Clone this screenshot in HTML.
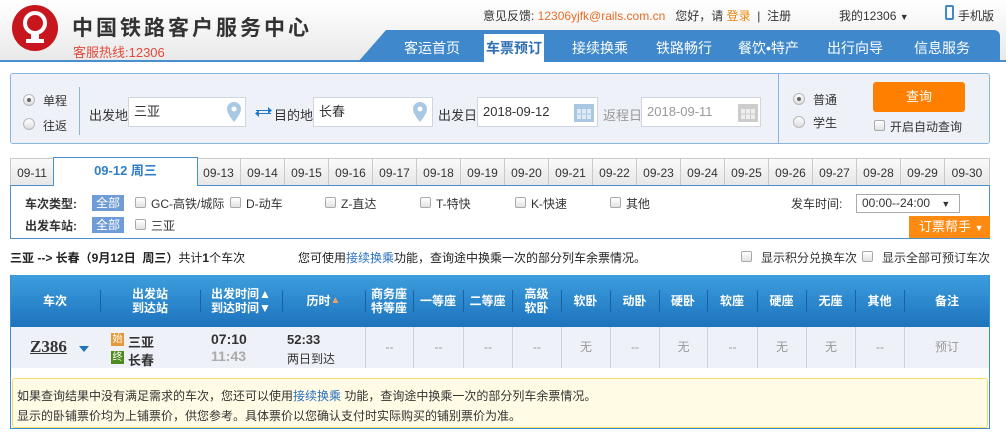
<!DOCTYPE html>
<html><head><meta charset="utf-8"><style>
*{margin:0;padding:0;box-sizing:border-box}
body{width:1006px;height:436px;overflow:hidden;background:#fff;font-family:"Liberation Sans","Noto Sans CJK SC",sans-serif;font-size:12px;color:#333;position:relative}
.a{position:absolute;white-space:nowrap}
.hdr{position:absolute;left:0;top:0;width:1006px;height:62px;background:linear-gradient(#fff,#e9e9e9);border-bottom:2px solid #4a90cf}
.nav{position:absolute;left:358px;top:30px;width:642px;height:32px;background:#3e88cb;border-radius:0 6px 0 0;clip-path:polygon(28px 0,100% 0,100% 100%,0 100%)}
.nav span{position:absolute;top:8px;color:#fff;font-size:14px}
.inp{position:absolute;height:30px;background:#fff;border:1px solid #cfd6e0;font-size:13px;padding-left:5px;line-height:28px}
.radio{position:absolute;width:12px;height:12px;border-radius:50%;border:1px solid #b8b8b8;background:linear-gradient(#fff,#ddd)}
.radio.on::after{content:"";position:absolute;left:3px;top:3px;width:4px;height:4px;border-radius:50%;background:#666}
.cb{position:absolute;width:11px;height:11px;border:1px solid #aaa;border-radius:2px;background:linear-gradient(#fff,#e2e2e2)}
.tab{position:absolute;top:158px;height:28px;border:1px solid #c9c9c9;border-bottom:none;border-left:none;background:linear-gradient(#fafafa,#e6e6e6);text-align:center;line-height:28px;font-size:12px;width:44px}
.badge{position:absolute;background:#6f9bd6;color:#fff;padding:0 4px;height:16px;line-height:16px;font-size:12px}
.th{position:absolute;top:275px;height:52px;color:#fff;font-weight:bold;font-size:12px;text-align:center;line-height:14px;display:flex;align-items:center;justify-content:center}
.td{position:absolute;top:327px;height:41px;border-left:1px solid #c8d3e2;text-align:center;line-height:41px;color:#999;font-size:12px}
</style></head><body>
<div class="hdr"></div>
<svg class="a" style="left:11px;top:4px" width="48" height="48" viewBox="0 0 48 48"><circle cx="24" cy="24" r="23" fill="#c7161e"/><circle cx="24" cy="19" r="10" fill="none" stroke="#fff" stroke-width="4"/><path d="M20 27h8v9h-8z" fill="#fff"/><rect x="15" y="35" width="18" height="4" fill="#fff"/></svg>
<div class="a" style="left:72px;top:12px;font-size:21px;letter-spacing:3px;color:#333;font-weight:bold">中国铁路客户服务中心</div>
<div class="a" style="left:73px;top:42px;font-size:13px;color:#e04a3a">客服热线:12306</div>
<div class="a" style="left:483px;top:7px;font-size:12px;color:#333">意见反馈: <span style="color:#e86c24">12306yjfk@rails.com.cn</span>&nbsp;&nbsp; 您好，请 <span style="color:#e8860e">登录</span> &nbsp;| &nbsp;注册</div>
<div class="a" style="left:839px;top:7px;font-size:12px">我的12306 <span style="font-size:9px">▼</span></div>
<div class="a" style="left:945px;top:5px;width:9px;height:15px;border:2px solid #3e88cb;border-radius:2px"></div>
<div class="a" style="left:958px;top:7px;font-size:12px">手机版</div>
<div class="nav">
<span style="left:46px">客运首页</span>
<span style="left:126px;top:4px;background:#fff;color:#2f6fb3;font-weight:bold;padding:4px 2px;height:28px">车票预订</span>
<span style="left:214px">接续换乘</span>
<span style="left:298px">铁路畅行</span>
<span style="left:380px">餐饮•特产</span>
<span style="left:469px">出行向导</span>
<span style="left:556px">信息服务</span>
</div>
<div class="a" style="left:10px;top:73px;width:980px;height:71px;background:#eef1f8;border:1px solid #8ab6de;border-radius:3px"></div>
<div class="radio on" style="left:23px;top:94px"></div><div class="a" style="left:43px;top:92px;font-size:12px">单程</div>
<div class="radio" style="left:23px;top:118px"></div><div class="a" style="left:43px;top:117px;font-size:12px">往返</div>
<div class="a" style="left:79px;top:87px;width:1px;height:48px;background:#8ab6de"></div>
<div class="a" style="left:89px;top:105px;font-size:13px">出发地</div>
<div class="inp" style="left:128px;top:97px;width:118px">三亚</div>
<svg class="a" style="left:227px;top:102px" width="14" height="20" viewBox="0 0 14 20"><path d="M7 0a7 7 0 0 1 7 7c0 5-7 13-7 13S0 12 0 7a7 7 0 0 1 7-7z" fill="#a8c8e4"/><circle cx="7" cy="7" r="2.5" fill="#fff"/></svg>
<svg class="a" style="left:255px;top:105px" width="17" height="14" viewBox="0 0 17 14"><path d="M1 5h12V2l4 3.5-4 3.5V6H1z M16 9H4v3L0 8.5 4 5v3h12z" fill="#1f7ac8"/></svg>
<div class="a" style="left:274px;top:105px;font-size:13px">目的地</div>
<div class="inp" style="left:313px;top:97px;width:120px">长春</div>
<svg class="a" style="left:413px;top:102px" width="14" height="20" viewBox="0 0 14 20"><path d="M7 0a7 7 0 0 1 7 7c0 5-7 13-7 13S0 12 0 7a7 7 0 0 1 7-7z" fill="#a8c8e4"/><circle cx="7" cy="7" r="2.5" fill="#fff"/></svg>
<div class="a" style="left:438px;top:105px;font-size:13px">出发日</div>
<div class="inp" style="left:477px;top:97px;width:121px">2018-09-12</div>
<svg class="a" style="left:574px;top:102px" width="20" height="20"><rect x="0" y="2" width="20" height="18" fill="#a9c6e3"/><rect x="3" y="7" width="14" height="10" fill="#dfeaf5"/><path d="M7.5 7v10M12.5 7v10M3 12h14" stroke="#a9c6e3"/></svg>
<div class="a" style="left:603px;top:105px;font-size:13px;color:#999">返程日</div>
<div class="inp" style="left:641px;top:97px;width:120px;color:#999">2018-09-11</div>
<svg class="a" style="left:738px;top:102px" width="20" height="20"><rect x="0" y="2" width="20" height="18" fill="#ccc"/><rect x="3" y="7" width="14" height="10" fill="#eee"/><path d="M7.5 7v10M12.5 7v10M3 12h14" stroke="#ccc"/></svg>
<div class="a" style="left:778px;top:74px;width:1px;height:69px;background:#8ab6de"></div>
<div class="radio on" style="left:793px;top:93px"></div><div class="a" style="left:813px;top:91px;font-size:12px">普通</div>
<div class="radio" style="left:793px;top:116px"></div><div class="a" style="left:813px;top:114px;font-size:12px">学生</div>
<div class="a" style="left:873px;top:82px;width:92px;height:30px;background:#ff7f00;border-radius:3px;color:#fff;text-align:center;line-height:30px;font-size:13px">查询</div>
<div class="cb" style="left:874px;top:120px"></div><div class="a" style="left:890px;top:118px;font-size:12px">开启自动查询</div>
<div class="tab" style="left:10px;border-left:1px solid #c9c9c9">09-11</div>
<div class="a" style="left:53px;top:157px;width:145px;height:29px;background:#fff;border:1px solid #4a90cf;border-bottom:none;text-align:center;line-height:26px;color:#2f7fc7;font-weight:bold;font-size:13px;z-index:2">09-12 周三</div>
<div class="tab" style="left:197px">09-13</div><div class="tab" style="left:241px">09-14</div><div class="tab" style="left:285px">09-15</div><div class="tab" style="left:329px">09-16</div><div class="tab" style="left:373px">09-17</div><div class="tab" style="left:417px">09-18</div><div class="tab" style="left:461px">09-19</div><div class="tab" style="left:505px">09-20</div><div class="tab" style="left:549px">09-21</div><div class="tab" style="left:593px">09-22</div><div class="tab" style="left:637px">09-23</div><div class="tab" style="left:681px">09-24</div><div class="tab" style="left:725px">09-25</div><div class="tab" style="left:769px">09-26</div><div class="tab" style="left:813px">09-27</div><div class="tab" style="left:857px">09-28</div><div class="tab" style="left:901px">09-29</div><div class="tab" style="left:945px;width:45px">09-30</div>
<div class="a" style="left:10px;top:185px;width:980px;height:54px;border:1px solid #4a90cf"></div>
<div class="a" style="left:54px;top:185px;width:143px;height:2px;background:#fff;z-index:3"></div>
<div class="a" style="left:25px;top:195px;font-weight:bold;font-size:12px">车次类型:</div>
<div class="badge" style="left:92px;top:195px">全部</div>
<div class="cb" style="left:135px;top:197px"></div><div class="a" style="left:151px;top:195px">GC-高铁/城际</div>
<div class="cb" style="left:230px;top:197px"></div><div class="a" style="left:246px;top:195px">D-动车</div>
<div class="cb" style="left:325px;top:197px"></div><div class="a" style="left:341px;top:195px">Z-直达</div>
<div class="cb" style="left:420px;top:197px"></div><div class="a" style="left:436px;top:195px">T-特快</div>
<div class="cb" style="left:515px;top:197px"></div><div class="a" style="left:531px;top:195px">K-快速</div>
<div class="cb" style="left:610px;top:197px"></div><div class="a" style="left:626px;top:195px">其他</div>
<div class="a" style="left:25px;top:217px;font-weight:bold;font-size:12px">出发车站:</div>
<div class="badge" style="left:92px;top:217px">全部</div>
<div class="cb" style="left:135px;top:219px"></div><div class="a" style="left:151px;top:217px">三亚</div>
<div class="a" style="left:791px;top:195px">发车时间:</div>
<div class="a" style="left:856px;top:194px;width:104px;height:19px;border:1px solid #aaa;background:#fff;line-height:17px;padding-left:5px">00:00--24:00 <span style="font-size:9px;margin-left:8px">▼</span></div>
<div class="a" style="left:909px;top:216px;width:81px;height:22px;background:#ff8a12;color:#fff;line-height:22px;padding-left:10px;font-size:13px">订票帮手 <span style="font-size:9px">▼</span></div>
<div class="a" style="left:10px;top:249px;font-size:12px;color:#222"><b>三亚 --&gt; 长春（9月12日&nbsp; 周三）</b>共计<b>1</b>个车次</div>
<div class="a" style="left:298px;top:249px;font-size:12px;color:#222">您可使用<span style="color:#2a6fc0">接续换乘</span>功能，查询途中换乘一次的部分列车余票情况。</div>
<div class="cb" style="left:741px;top:251px"></div><div class="a" style="left:761px;top:249px">显示积分兑换车次</div>
<div class="cb" style="left:862px;top:251px"></div><div class="a" style="left:882px;top:249px">显示全部可预订车次</div>
<div class="a" style="left:10px;top:275px;width:980px;height:52px;background:linear-gradient(#3d9ede,#1d73bd)"></div>
<div class="a" style="left:10px;top:275px;width:980px;height:154px;border:1px solid #3b8fd0;border-top:none"></div>
<div class="th" style="left:10px;width:90px">车次</div>
<div class="th" style="left:100px;width:100px">出发站<br>到达站</div>
<div class="th" style="left:200px;width:82px">出发时间▲<br>到达时间▼</div>
<div class="th" style="left:282px;width:83px">历时 <span style="color:#f0a060;font-size:10px">▲</span></div>
<div class="th" style="left:365px;width:48px">商务座<br>特等座</div>
<div class="th" style="left:413px;width:50px">一等座</div>
<div class="th" style="left:463px;width:49px">二等座</div>
<div class="th" style="left:512px;width:49px">高级<br>软卧</div>
<div class="th" style="left:561px;width:49px">软卧</div>
<div class="th" style="left:610px;width:49px">动卧</div>
<div class="th" style="left:659px;width:48px">硬卧</div>
<div class="th" style="left:707px;width:50px">软座</div>
<div class="th" style="left:757px;width:49px">硬座</div>
<div class="th" style="left:806px;width:49px">无座</div>
<div class="th" style="left:855px;width:49px">其他</div>
<div class="th" style="left:904px;width:86px">备注</div>
<div class="a" style="left:100px;top:290px;width:1px;height:22px;background:#1b62a3"></div><div class="a" style="left:200px;top:290px;width:1px;height:22px;background:#1b62a3"></div><div class="a" style="left:282px;top:290px;width:1px;height:22px;background:#1b62a3"></div><div class="a" style="left:365px;top:290px;width:1px;height:22px;background:#1b62a3"></div><div class="a" style="left:413px;top:290px;width:1px;height:22px;background:#1b62a3"></div><div class="a" style="left:463px;top:290px;width:1px;height:22px;background:#1b62a3"></div><div class="a" style="left:512px;top:290px;width:1px;height:22px;background:#1b62a3"></div><div class="a" style="left:561px;top:290px;width:1px;height:22px;background:#1b62a3"></div><div class="a" style="left:610px;top:290px;width:1px;height:22px;background:#1b62a3"></div><div class="a" style="left:659px;top:290px;width:1px;height:22px;background:#1b62a3"></div><div class="a" style="left:707px;top:290px;width:1px;height:22px;background:#1b62a3"></div><div class="a" style="left:757px;top:290px;width:1px;height:22px;background:#1b62a3"></div><div class="a" style="left:806px;top:290px;width:1px;height:22px;background:#1b62a3"></div><div class="a" style="left:855px;top:290px;width:1px;height:22px;background:#1b62a3"></div><div class="a" style="left:904px;top:290px;width:1px;height:22px;background:#1b62a3"></div>
<div class="a" style="left:11px;top:327px;width:978px;height:41px;background:#eef1f8"></div>
<div class="a" style="left:30px;top:337px;font-size:17px;font-weight:bold;font-family:'Liberation Serif',serif;text-decoration:underline;color:#333">Z386</div>
<div class="a" style="left:79px;top:346px;width:0;height:0;border-left:5px solid transparent;border-right:5px solid transparent;border-top:6px solid #1d73bd"></div>
<div class="a" style="left:111px;top:333px;width:13px;height:13px;background:#e39b3a;color:#fff;font-size:10px;line-height:13px;text-align:center">始</div>
<div class="a" style="left:128px;top:332px;font-weight:bold;font-size:13px">三亚</div>
<div class="a" style="left:111px;top:351px;width:13px;height:13px;background:#4f8a1e;color:#fff;font-size:10px;line-height:13px;text-align:center">终</div>
<div class="a" style="left:128px;top:350px;font-weight:bold;font-size:13px">长春</div>
<div class="a" style="left:211px;top:331px;font-weight:bold;font-size:14px">07:10</div>
<div class="a" style="left:211px;top:348px;font-weight:bold;font-size:14px;color:#aaa">11:43</div>
<div class="a" style="left:287px;top:332px;font-weight:bold;font-size:13px">52:33</div>
<div class="a" style="left:287px;top:350px;font-size:12px">两日到达</div>
<div class="td" style="left:365px;width:48px">--</div><div class="td" style="left:413px;width:50px">--</div><div class="td" style="left:463px;width:49px">--</div><div class="td" style="left:512px;width:49px">--</div><div class="td" style="left:561px;width:49px">无</div><div class="td" style="left:610px;width:49px">--</div><div class="td" style="left:659px;width:48px">无</div><div class="td" style="left:707px;width:50px">--</div><div class="td" style="left:757px;width:49px">无</div><div class="td" style="left:806px;width:49px">无</div><div class="td" style="left:855px;width:49px">--</div><div class="td" style="left:904px;width:85px">预订</div>
<div class="a" style="left:12px;top:378px;width:976px;height:50px;background:#fffbe5;border:1px solid #f5dc6a;border-radius:3px"></div>
<div class="a" style="left:17px;top:387px;font-size:12px;color:#333">如果查询结果中没有满足需求的车次，您还可以使用<span style="color:#2a6fc0">接续换乘</span> 功能，查询途中换乘一次的部分列车余票情况。</div>
<div class="a" style="left:17px;top:407px;font-size:12px;color:#333">显示的卧铺票价均为上铺票价，供您参考。具体票价以您确认支付时实际购买的铺别票价为准。</div>
</body></html>
